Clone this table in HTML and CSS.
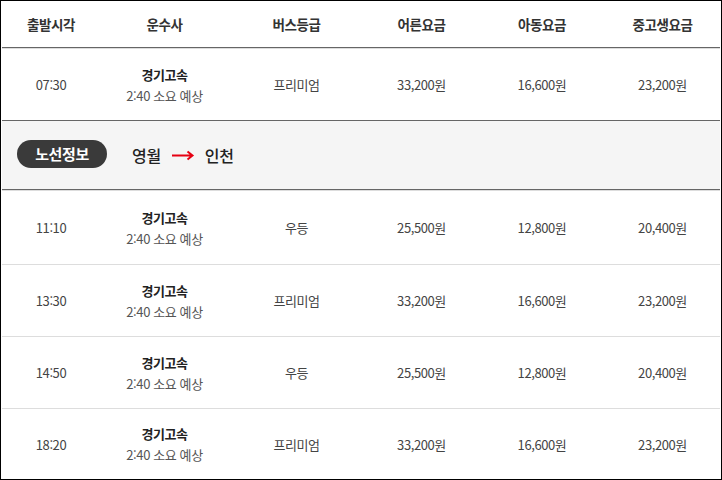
FILE: index.html
```html
<!DOCTYPE html>
<html lang="ko">
<head>
<meta charset="utf-8">
<link rel="stylesheet" href="styles.css">
</head>
<body>
<div class="frame">
  <div class="row head">
    <div>출발시각</div><div>운수사</div><div>버스등급</div><div>어른요금</div><div>아동요금</div><div>중고생요금</div>
  </div>
  <div class="row item">
    <div>07:30</div><div class="co"><b>경기고속</b><span>2:40 소요 예상</span></div><div>프리미엄</div><div>33,200원</div><div>16,600원</div><div>23,200원</div>
  </div>
  <div class="route">
    <span class="pill">노선정보</span>
    <span class="city">영월</span>
    <svg class="arrow" width="24" height="12" viewBox="0 0 24 12"><path d="M1 6.5H21.5M16.5 2.5L21.5 6.5L16.5 10.5" fill="none" stroke="#e60012" stroke-width="2"/></svg>
    <span class="city">인천</span>
  </div>
  <div class="row item tall">
    <div>11:10</div><div class="co"><b>경기고속</b><span>2:40 소요 예상</span></div><div>우등</div><div>25,500원</div><div>12,800원</div><div>20,400원</div>
  </div>
  <div class="row item">
    <div>13:30</div><div class="co"><b>경기고속</b><span>2:40 소요 예상</span></div><div>프리미엄</div><div>33,200원</div><div>16,600원</div><div>23,200원</div>
  </div>
  <div class="row item">
    <div>14:50</div><div class="co"><b>경기고속</b><span>2:40 소요 예상</span></div><div>우등</div><div>25,500원</div><div>12,800원</div><div>20,400원</div>
  </div>
  <div class="row item last">
    <div>18:20</div><div class="co"><b>경기고속</b><span>2:40 소요 예상</span></div><div>프리미엄</div><div>33,200원</div><div>16,600원</div><div>23,200원</div>
  </div>
</div>
</body>
</html>
```
FILE: styles.css
```css
html, body {
  margin: 0;
  padding: 0;
  background: #fff;
}
.frame {
  width: 722px;
  height: 480px;
  box-sizing: border-box;
  border: 1px solid #000;
  padding: 0 1px;
  font-family: "Noto Sans CJK KR", "Noto Sans", sans-serif;
  font-size: 13px;
  color: #444;
  letter-spacing: -0.4px;
  overflow: hidden;
}
.row {
  display: grid;
  grid-template-columns: 98px 129px 135px 115px 126px 115px;
  align-items: center;
  text-align: center;
}
.head {
  height: 46px;
  border-bottom: 1px solid #666;
  font-weight: bold;
  color: #333;
  font-size: 13.5px;
}
.item {
  height: 71px;
  border-top: 1px solid #ddd;
}
.item.tall { height: 73px; }
.item.last { height: 70px; }
.co {
  display: flex;
  flex-direction: column;
  align-items: center;
  line-height: 21px;
}
.co b {
  color: #222;
  font-weight: bold;
}
.co span { color: #555; }
.route {
  height: 68px;
  border-top: 1px solid #666;
  border-bottom: 1px solid #666;
  background: #f5f5f5;
  display: flex;
  align-items: center;
  padding-left: 15px;
  color: #222;
}
.pill {
  display: inline-flex;
  align-items: center;
  justify-content: center;
  width: 90px;
  height: 28px;
  border-radius: 14px;
  background: #3a3a3a;
  color: #fff;
  font-weight: bold;
  font-size: 15px;
  margin-right: 25px;
  margin-top: -3px;
}
.city {
  font-size: 16px;
  font-weight: 500;
  letter-spacing: -0.3px;
}
.arrow {
  margin: 0 10px 0 10px;
}
```
